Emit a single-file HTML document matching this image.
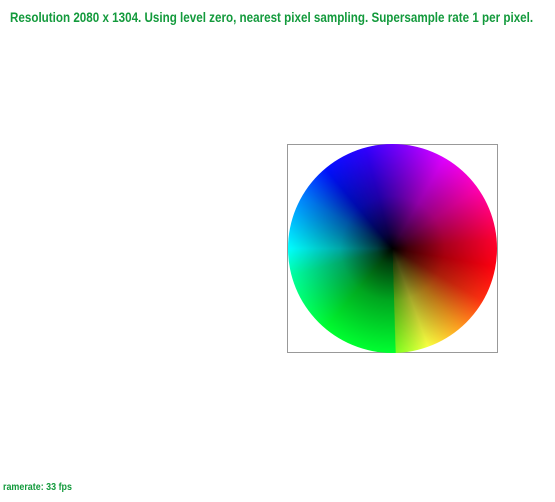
<!DOCTYPE html>
<html><head><meta charset="utf-8"><style>
html,body{margin:0;padding:0;background:#fff;width:555px;height:502px;overflow:hidden;position:relative}
.t{position:absolute;left:10px;top:9px;font-family:"Liberation Sans",sans-serif;font-weight:bold;font-size:14px;color:#139a3c;white-space:nowrap;transform-origin:0 0;transform:scaleX(0.831)}
.f{position:absolute;left:3px;top:481px;font-family:"Liberation Sans",sans-serif;font-weight:bold;font-size:10.5px;color:#139a3c;white-space:nowrap;transform-origin:0 0;transform:scaleX(0.85)}
.box{position:absolute;left:287px;top:144px;width:211px;height:209px;border:1px solid #999;box-sizing:border-box}
.w{position:absolute;left:288px;top:144px;width:209px;height:209px;border-radius:50%;
background:radial-gradient(circle closest-side,#000 0%,rgba(0,0,0,.75) 15%,rgba(0,0,0,.35) 50%,rgba(0,0,0,0) 100%),
conic-gradient(from 0deg,#6a00ff 0deg,#e000ff 30deg,#ff00b0 55deg,#ff0030 85deg,#ff0010 100deg,#ff3010 120deg,#ffa020 140deg,#f8ff40 160deg,#80ff20 178deg,#00ff30 178.5deg,#00ff30 220deg,#00ffa0 255deg,#00ffff 270deg,#0080ff 300deg,#0010ff 320deg,#3000ff 345deg,#6a00ff 360deg)}
</style></head><body>
<div class="t">Resolution 2080 x 1304. Using level zero, nearest pixel sampling. Supersample rate 1 per pixel.</div>
<div class="box"></div>
<div class="w"></div>
<div class="f">ramerate: 33 fps</div>
</body></html>
